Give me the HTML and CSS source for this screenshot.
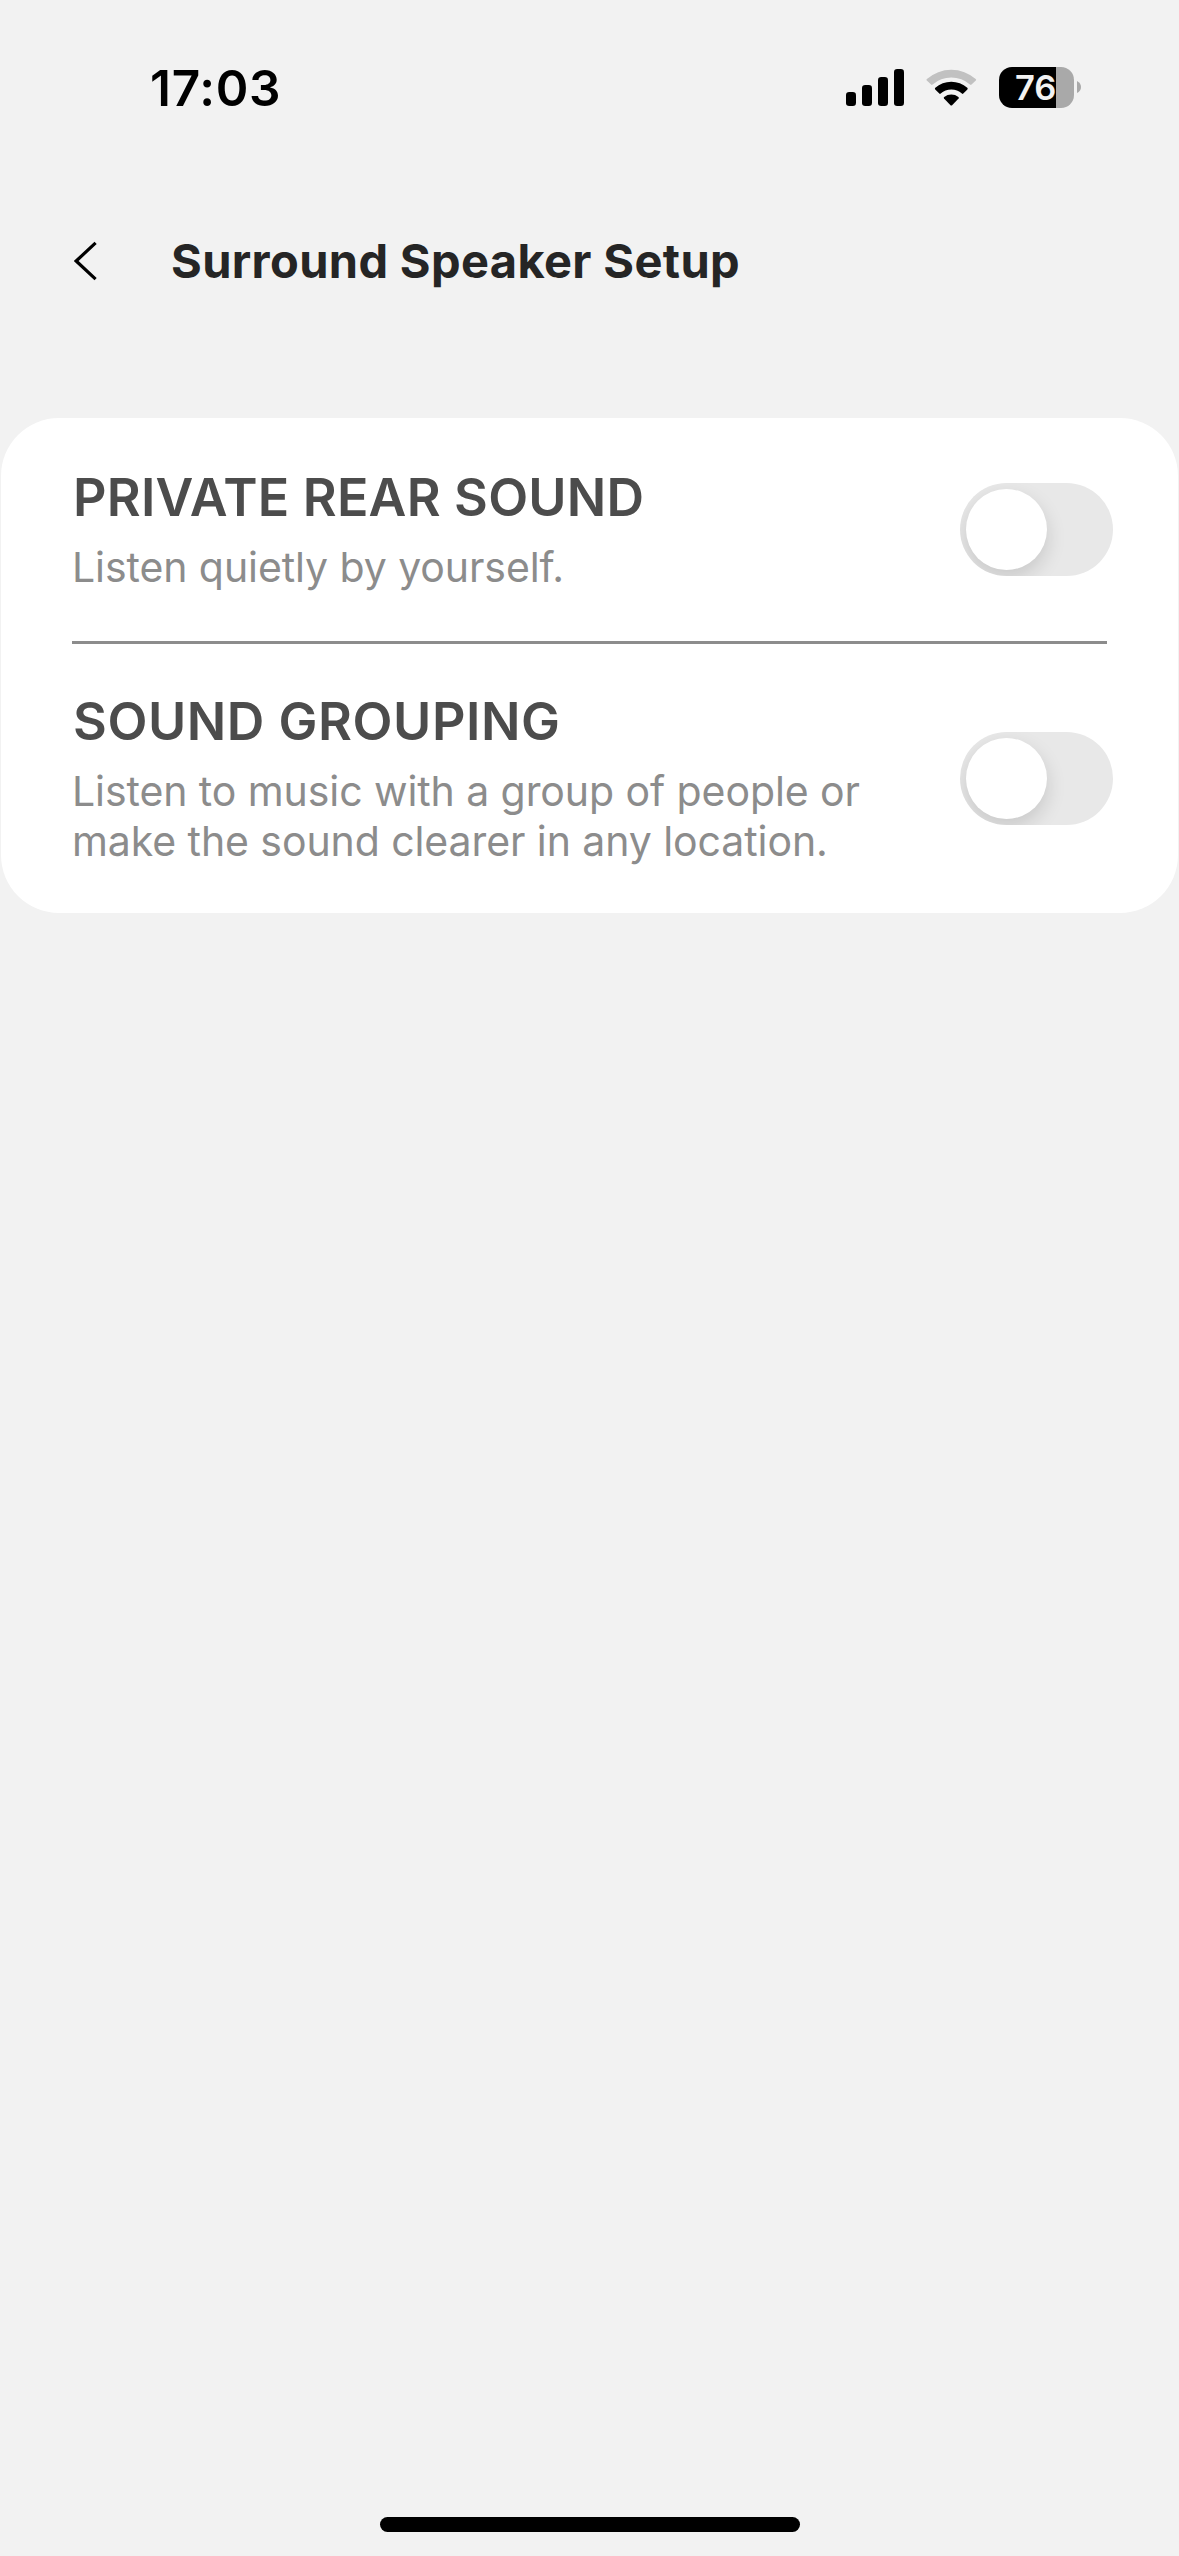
FILE: index.html
```
<!DOCTYPE html>
<html lang="en">
<head>
<meta charset="utf-8">
<title>Surround Speaker Setup</title>
<link rel="stylesheet" href="styles.css">
</head>
<body>
<div class="screen">
  <div class="status-bar">
    <time class="clock">17:03</time>
    <div class="status-icons">
      <svg class="signal" width="58" height="38" viewBox="0 0 58 38" aria-hidden="true">
        <rect x="0" y="24" width="10" height="14" rx="3.2"/>
        <rect x="16" y="17" width="10" height="21" rx="3.2"/>
        <rect x="32" y="9" width="10" height="29" rx="3.2"/>
        <rect x="48" y="1" width="10" height="37" rx="3.2"/>
      </svg>
      <svg class="wifi" width="52" height="38" viewBox="0 0 52 38" aria-hidden="true">
        <path class="wifi-off" d="M0.800 12.600Q0 11.800 0.900 11A37 37 0 0 1 49.700 11Q50.600 11.800 49.800 12.600L45.500 16.600Q44.800 17.200 44 16.500A28.500 28.500 0 0 0 6.600 16.500Q5.800 17.200 5.100 16.600Z"/>
        <path d="M9.200 21.400Q8.500 20.600 9.300 19.800A24 24 0 0 1 41.300 19.800Q42.100 20.600 41.400 21.400L37.300 25.600Q36.600 26.200 35.900 25.600A15.500 15.500 0 0 0 14.700 25.600Q14 26.200 13.300 25.600Z"/>
        <path d="M18 30.600Q17.300 29.700 18.200 29A11.600 11.600 0 0 1 32.400 29Q33.300 29.700 32.600 30.600L26.100 37.200Q25.300 38 24.500 37.200Z"/>
      </svg>
      <div class="battery">
        <div class="battery-body"><span class="battery-level">76</span></div>
        <svg class="battery-cap" width="4" height="12" viewBox="0 0 4 12" aria-hidden="true"><path d="M0 0Q4 2 4 6T0 12Z"/></svg>
      </div>
    </div>
  </div>
  <header class="nav">
    <svg class="back" width="24" height="40" viewBox="0 0 24 40" aria-label="Back"><path d="M21.600 1.800 2.200 20 21.600 38.200"/></svg>
    <h1 class="title">Surround Speaker Setup</h1>
  </header>
  <main class="card">
    <section class="row row-private">
      <div class="text">
        <h2 class="heading">PRIVATE REAR SOUND</h2>
        <p class="desc">Listen quietly by yourself.</p>
      </div>
      <div class="toggle" role="switch" aria-checked="false"><span class="knob"></span></div>
    </section>
    <hr class="divider">
    <section class="row row-grouping">
      <div class="text">
        <h2 class="heading">SOUND GROUPING</h2>
        <p class="desc">Listen to music with a group of people or<br>make the sound clearer in any location.</p>
      </div>
      <div class="toggle" role="switch" aria-checked="false"><span class="knob"></span></div>
    </section>
  </main>
  <div class="home-indicator"></div>
</div>
</body>
</html>
```
FILE: styles.css
```
* { box-sizing: border-box; margin: 0; padding: 0; }

body { background: #f2f2f2; font-family: "Inter", sans-serif; }

.screen {
  display: flex;
  flex-direction: column;
  width: 1179px;
  height: 2556px;
  padding: 58px 0 24px;
  background: #f2f2f2;
}

.status-bar {
  display: flex;
  align-items: flex-start;
  justify-content: space-between;
  height: 60px;
  padding: 0 98px 0 150px;
}
.clock {
  font-size: 49.5px;
  font-weight: 600;
  line-height: 60px;
  letter-spacing: 0.7px;
  color: #000;
}
.status-icons { display: flex; align-items: flex-start; padding-top: 9px; }
.signal { margin-top: 1px; }
.wifi { margin: 1px 21px 0 22px; }
.wifi-off { fill: #c1c1c1; }

.battery { display: flex; align-items: flex-start; gap: 3px; }
.battery-body {
  width: 75px;
  height: 41px;
  padding-left: 16px;
  border-radius: 13px;
  background: linear-gradient(90deg, #000 57px, #a9a9a9 57px);
}
.battery-level {
  display: block;
  font-size: 34.5px;
  font-weight: 600;
  line-height: 41px;
  color: #f2f2f2;
}
.battery-cap { margin-top: 14px; fill: #a9a9a9; }

.nav {
  display: flex;
  align-items: center;
  gap: 73px;
  height: 60px;
  margin-top: 113px;
  padding-left: 74px;
}
.back { fill: none; stroke: #000; stroke-width: 3.2; }
.title {
  font-size: 47px;
  font-weight: 700;
  line-height: 60px;
  letter-spacing: 0.36px;
  color: #252525;
}

.card {
  margin: 127px 1.5px 0 1px;
  border-radius: 58px;
  background: #fff;
}
.row {
  display: flex;
  align-items: center;
  justify-content: space-between;
  padding: 0 64.5px 0 72px;
}
.row-private { height: 223px; }
.row-grouping { height: 269px; }
.text { align-self: flex-start; }
.row-private .text { padding-top: 48px; }
.row-grouping .text { padding-top: 46px; }

.heading {
  font-size: 52px;
  font-weight: 600;
  line-height: 64px;
  color: #4c4c4c;
}
.row-private .heading { letter-spacing: 0.22px; }
.row-grouping .heading { letter-spacing: 0.56px; }
.desc {
  margin: 12px 0 0 -1px;
  font-size: 41px;
  line-height: 50px;
  letter-spacing: -0.08px;
  color: #8c8c8c;
}
.divider {
  height: 3px;
  margin: 0 70.5px 0 71px;
  border: 0;
  background: #8c8c8c;
}

.toggle {
  width: 153px;
  height: 93px;
  padding: 6px;
  border-radius: 47px;
  background: #e8e8e8;
  overflow: hidden;
}
.knob {
  display: block;
  width: 81px;
  height: 81px;
  border-radius: 50%;
  background: #fff;
  box-shadow: 0 8px 20px rgba(0, 0, 0, 0.14);
}

.home-indicator {
  width: 420px;
  height: 15px;
  margin: auto auto 0 380px;
  border-radius: 8px;
  background: #000;
}
```
